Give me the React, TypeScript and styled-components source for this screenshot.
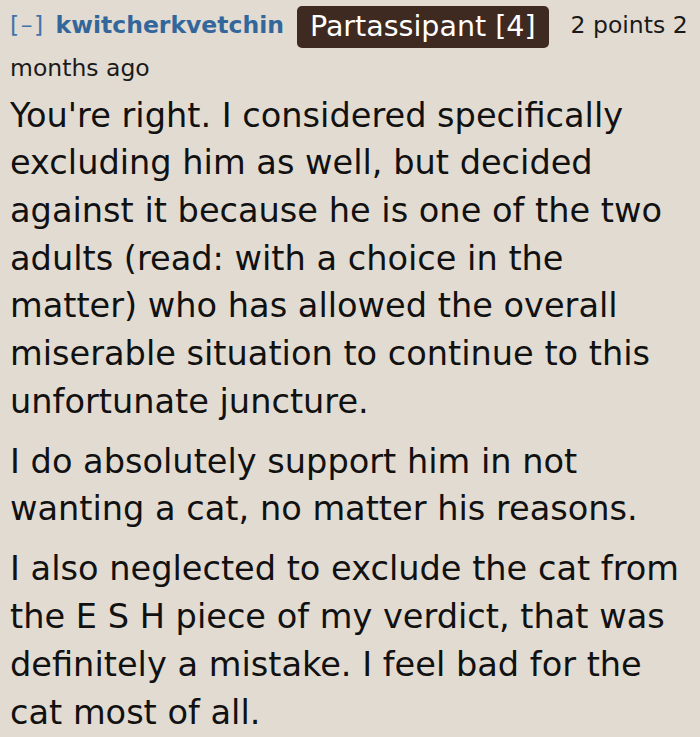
import React from "react";
import styled, { createGlobalStyle } from "styled-components";

const Global = createGlobalStyle`
  html, body { margin: 0; padding: 0; background: #e2dbd1; }
  body { font-family: "DejaVu Sans", Verdana, sans-serif; color: #111; }
`;

const Comment = styled.div`
  padding: 5px 4px 0 10px;
`;

const Tagline = styled.div`
  font-size: 23.5px;
  line-height: 40px;
  color: #1a1a1a;
  margin-bottom: 4px;
`;

const Expand = styled.span`
  color: #3f73ad;
  letter-spacing: 1.5px;
  margin-right: 11px;
`;

const Author = styled.span`
  color: #33679b;
  font-weight: bold;
  margin-right: 13px;
`;

const Flair = styled.span`
  display: inline-block;
  background: #3f2a22;
  color: #fff;
  font-size: 28.5px;
  line-height: 42px;
  padding: 0 13px;
  border-radius: 5px;
  margin-right: 22px;
  vertical-align: middle;
`;

const Body = styled.div`
  font-size: 33.6px;
  line-height: 47.7px;
  color: #111;
  padding-right: 16px;
`;

const Para = styled.p`
  margin: 0 0 12.3px 0;
`;

export default function App() {
  return (
    <>
      <Global />
      <Comment>
        <Tagline>
          <Expand>[–]</Expand>
          <Author>kwitcherkvetchin</Author>
          <Flair>Partassipant [4]</Flair>2 points 2 months ago
        </Tagline>
        <Body>
          <Para>
            You're right. I considered specifically excluding him as well, but
            decided against it because he is one of the two adults (read: with a
            choice in the matter) who has allowed the overall miserable
            situation to continue to this unfortunate juncture.
          </Para>
          <Para>
            I do absolutely support him in not wanting a cat, no matter his
            reasons.
          </Para>
          <Para>
            I also neglected to exclude the cat from the E S H piece of my
            verdict, that was definitely a mistake. I feel bad for the cat most
            of all.
          </Para>
        </Body>
      </Comment>
    </>
  );
}
